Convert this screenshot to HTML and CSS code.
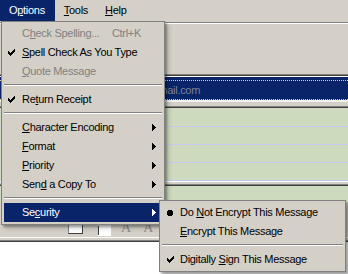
FILE: index.html
```html
<!DOCTYPE html>
<html>
<head>
<meta charset="utf-8">
<link rel="stylesheet" href="styles.css">
</head>
<body>
<div class="app">
  <div class="menubar">
    <span class="mb-item open">O<u>p</u>tions</span>
    <span class="mb-item"><u>T</u>ools</span>
    <span class="mb-item"><u>H</u>elp</span>
  </div>
  <div class="rule-top"></div>
  <div class="toolbar"></div>
  <div class="rule-bot"></div>
  <div class="addr">
    <div class="addr-row"><span class="addr-text">someone@hotmail.com</span></div>
  </div>
  <div class="rule-mid"></div>
  <div class="list">
    <div class="list-row"></div>
    <div class="list-row"></div>
    <div class="list-row"></div>
    <div class="list-row"></div>
  </div>
  <div class="rule-mid2"></div>
  <div class="green-gap"></div>
  <div class="fmtbar">
    <span class="combo"><svg width="5" height="3" viewBox="0 0 5 3" shape-rendering="crispEdges"><path fill="#808080" d="M0 0h5v1H0zM1 1h3v1H1zM2 2h1v1H2z"/></svg></span>
    <svg class="fcolor" width="21" height="14" viewBox="0 0 21 14" shape-rendering="crispEdges"><path fill="#000" d="M0 0h13v3H0z"/><path fill="#fff" d="M7 3h13v11H7z"/><path fill="#404040" d="M7 4h1v9H7z"/></svg>
    <span class="glyph-a">A</span>
    <span class="glyph-a">A</span>
  </div>
  <div class="rule-bottom"></div>
  <div class="page"></div>
</div>

<div class="menu menu-main">
  <div class="mi disabled"><span class="ic"></span><span class="lbl">C<u>h</u>eck Spelling...</span><span class="sc">Ctrl+K</span><span class="ar"></span></div>
  <div class="mi"><span class="ic"><svg class="chk" width="7" height="7" viewBox="0 0 7 7" shape-rendering="crispEdges"><path d="M0 2h1v3H0zM1 3h1v3H1zM2 4h1v3H2zM3 3h1v3H3zM4 2h1v3H4zM5 1h1v3H5zM6 0h1v3H6z"/></svg></span><span class="lbl"><u>S</u>pell Check As You Type</span><span class="ar"></span></div>
  <div class="mi disabled"><span class="ic"></span><span class="lbl"><u>Q</u>uote Message</span><span class="ar"></span></div>
  <div class="sep"></div>
  <div class="mi"><span class="ic"><svg class="chk" width="7" height="7" viewBox="0 0 7 7" shape-rendering="crispEdges"><path d="M0 2h1v3H0zM1 3h1v3H1zM2 4h1v3H2zM3 3h1v3H3zM4 2h1v3H4zM5 1h1v3H5zM6 0h1v3H6z"/></svg></span><span class="lbl">Re<u>t</u>urn Receipt</span><span class="ar"></span></div>
  <div class="sep"></div>
  <div class="mi"><span class="ic"></span><span class="lbl"><u>C</u>haracter Encoding</span><span class="ar"><svg width="4" height="7" viewBox="0 0 4 7" shape-rendering="crispEdges"><path d="M0 0h1v7H0zM1 1h1v5H1zM2 2h1v3H2zM3 3h1v1H3z"/></svg></span></div>
  <div class="mi"><span class="ic"></span><span class="lbl"><u>F</u>ormat</span><span class="ar"><svg width="4" height="7" viewBox="0 0 4 7" shape-rendering="crispEdges"><path d="M0 0h1v7H0zM1 1h1v5H1zM2 2h1v3H2zM3 3h1v1H3z"/></svg></span></div>
  <div class="mi"><span class="ic"></span><span class="lbl"><u>P</u>riority</span><span class="ar"><svg width="4" height="7" viewBox="0 0 4 7" shape-rendering="crispEdges"><path d="M0 0h1v7H0zM1 1h1v5H1zM2 2h1v3H2zM3 3h1v1H3z"/></svg></span></div>
  <div class="mi"><span class="ic"></span><span class="lbl">Sen<u>d</u> a Copy To</span><span class="ar"><svg width="4" height="7" viewBox="0 0 4 7" shape-rendering="crispEdges"><path d="M0 0h1v7H0zM1 1h1v5H1zM2 2h1v3H2zM3 3h1v1H3z"/></svg></span></div>
  <div class="sep"></div>
  <div class="mi active"><span class="ic"></span><span class="lbl">Se<u>c</u>urity</span><span class="ar"><svg width="4" height="7" viewBox="0 0 4 7" shape-rendering="crispEdges"><path d="M0 0h1v7H0zM1 1h1v5H1zM2 2h1v3H2zM3 3h1v1H3z"/></svg></span></div>
</div>

<div class="menu menu-sub">
  <div class="mi"><span class="ic ic-sub"><svg width="6" height="6" viewBox="0 0 6 6" shape-rendering="crispEdges"><path d="M1 0h4v1H1zM0 1h6v4H0zM1 5h4v1H1z"/></svg></span><span class="lbl">Do <u>N</u>ot Encrypt This Message</span></div>
  <div class="mi"><span class="ic ic-sub"></span><span class="lbl"><u>E</u>ncrypt This Message</span></div>
  <div class="sep"></div>
  <div class="mi"><span class="ic ic-sub"><svg width="7" height="7" viewBox="0 0 7 7" shape-rendering="crispEdges"><path d="M0 2h1v3H0zM1 3h1v3H1zM2 4h1v3H2zM3 3h1v3H3zM4 2h1v3H4zM5 1h1v3H5zM6 0h1v3H6z"/></svg></span><span class="lbl">Digitally <u>S</u>ign This Message</span></div>
</div>
</body>
</html>
```

FILE: styles.css
```css
html, body {
  margin: 0;
  padding: 0;
}
body {
  width: 348px;
  height: 274px;
  overflow: hidden;
  position: relative;
  background: #d4d0c8;
  font-family: "Liberation Sans", Arial, sans-serif;
  font-size: 11px;
  letter-spacing: -0.3px;
  color: #000;
}
u {
  text-decoration-thickness: 1px;
  text-underline-offset: 1px;
}
.app {
  display: flex;
  flex-direction: column;
  height: 274px;
}
.menubar {
  display: flex;
  height: 21px;
  line-height: 21px;
}
.mb-item {
  padding: 0 8px 0 9px;
}
.mb-item.open {
  background: #0a246a;
  color: #fff;
  padding: 0 10px 0 9px;
}
.rule-top {
  height: 1px;
  margin-top: 1px;
  background: #808080;
  border-bottom: 1px solid #fff;
}
.toolbar {
  height: 50px;
}
.rule-bot {
  height: 1px;
  background: #404040;
  border-top: 1px solid #808080;
  border-bottom: 1px solid #fff;
}
.addr {
  background: #0a246a;
  padding-top: 3px;
}
.addr-row {
  height: 18px;
  line-height: 18px;
  border-top: 1px dotted #e6d48e;
  border-bottom: 1px dotted #e6d48e;
  padding-left: 90px;
  color: #7d8296;
}
.rule-mid {
  height: 4px;
  border-top: 2px solid #f2f1ec;
  border-bottom: 1px solid #808080;
}
.list {
  background: #cddabd;
  border-top: 1px solid #404040;
  padding-top: 1px;
}
.list-row {
  height: 17px;
  border-bottom: 1px solid #c6c9ef;
}
.rule-mid2 {
  height: 2px;
  border-top: 1px solid #fff;
  border-bottom: 1px solid #808080;
}
.green-gap {
  height: 17px;
  background: #cddabd;
  border-top: 1px solid #404040;
}
.fmtbar {
  height: 35px;
  border-bottom: 1px solid #fff;
  display: flex;
  align-items: flex-end;
  padding-left: 68px;
  box-sizing: border-box;
  padding-bottom: 1px;
}
.combo {
  width: 15px;
  height: 20px;
  margin-bottom: 2px;
  background: #fff;
  border: 1px solid #808080;
  border-right-color: #404040;
  border-bottom-color: #404040;
  display: flex;
  justify-content: center;
  align-items: flex-end;
  padding-bottom: 9px;
  box-sizing: border-box;
}
.fcolor {
  margin-left: 8px;
  margin-bottom: 0;
}
.glyph-a {
  font-family: "Liberation Serif", serif;
  font-size: 14px;
  line-height: 16px;
  color: #8c8c8c;
  margin-left: 9px;
  letter-spacing: 0;
}
.glyph-a + .glyph-a {
  margin-left: 12px;
}
.rule-bottom {
  height: 2px;
  border-bottom: 1px solid #808080;
}
.page {
  flex: 1;
  background: #fff;
  border-top: 1px solid #404040;
}

/* menus */
.menu {
  position: absolute;
  background: #d4d0c8;
  border: 1px solid #808080;
  padding: 2px;
  box-sizing: border-box;
  box-shadow: 2px 2px 2px rgba(0,0,0,0.3), 4px 4px 4px rgba(0,0,0,0.15);
}
.menu-main {
  left: 1px;
  top: 21px;
  width: 164px;
}
.menu-sub {
  left: 159px;
  top: 200px;
  width: 187px;
}
.mi {
  display: flex;
  align-items: center;
  height: 19px;
  line-height: 19px;
  white-space: nowrap;
}
.mi.disabled {
  color: #808080;
}
.mi.active {
  background: #0a246a;
  color: #fff;
}
.mi.active svg {
  fill: #fff;
}
.ic {
  width: 18px;
  flex: none;
  display: flex;
  align-items: center;
  padding-left: 4px;
  box-sizing: border-box;
}
.ic-sub {
  padding-left: 5px;
}
.lbl {
  flex: 1;
}
.sc {
  flex: none;
}
.ar {
  width: 21px;
  flex: none;
  display: flex;
  align-items: center;
  padding-left: 11px;
  box-sizing: border-box;
}
.sep {
  height: 9px;
  display: flex;
  flex-direction: column;
  padding-top: 3px;
  box-sizing: border-box;
}
.sep::before {
  content: "";
  height: 1px;
  background: #808080;
  border-bottom: 1px solid #fff;
}
```
